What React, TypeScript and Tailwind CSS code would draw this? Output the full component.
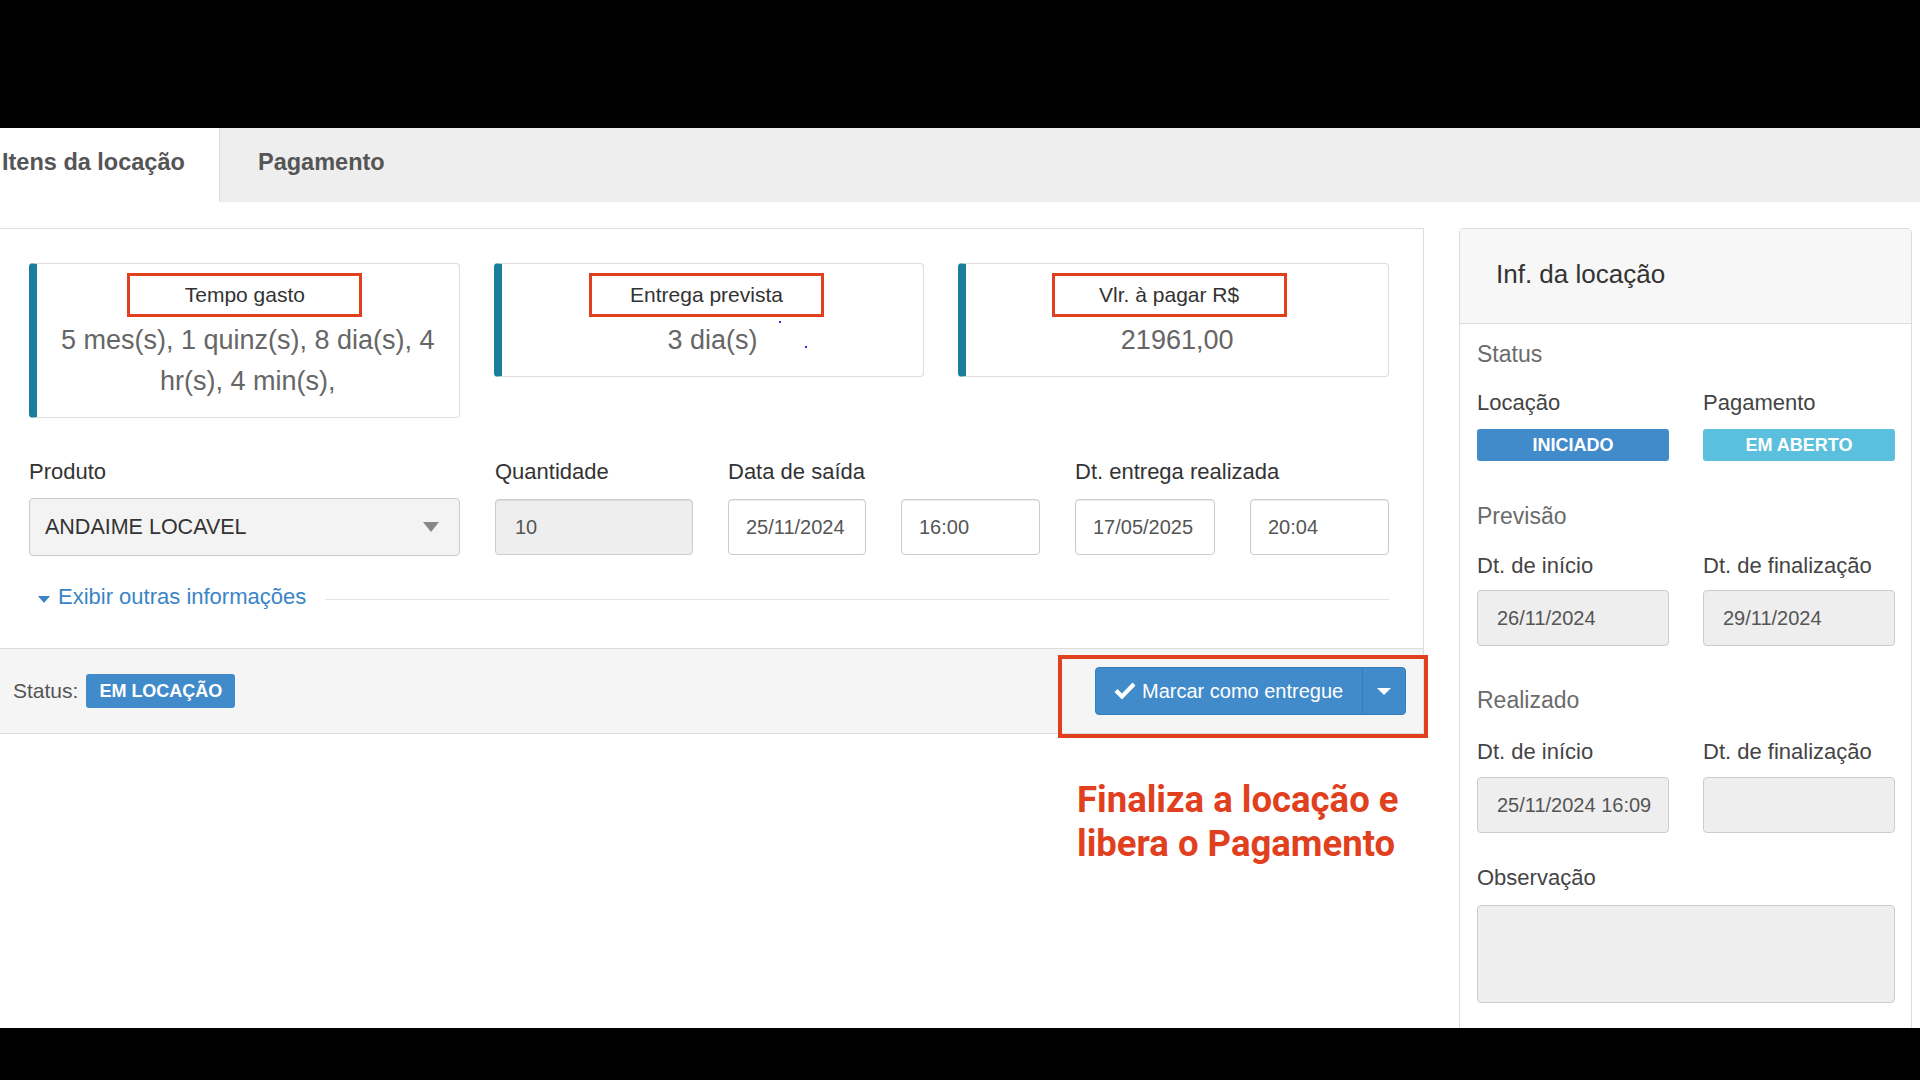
import React from "react";

function InfoCard({ title, shift, children }: { title: string; shift: string; children: React.ReactNode }) {
  return (
    <div className="relative border border-[#ddd] border-l-[8px] border-l-[#1b7d9c] rounded-[4px] pt-[9px] pb-[15px] px-[12px] text-center">
      <div className="flex justify-center">
        <div className={`w-[235px] h-[44px] border-[3px] border-[#e0401e] flex items-center justify-center text-[21px] text-[#333] ${shift}`}>
          {title}
        </div>
      </div>
      <div className="mt-[3px] text-[27px] leading-[41px] text-[#666]">{children}</div>
    </div>
  );
}

function Label({ children, className = "" }: { children: React.ReactNode; className?: string }) {
  return <div className={`text-[22px] leading-[30px] text-[#333] whitespace-nowrap ${className}`}>{children}</div>;
}

function Field({ value, muted }: { value: string; muted?: boolean }) {
  return (
    <div
      className={`h-[56px] border border-[#ccc] rounded-[4px] flex items-center text-[20px] text-[#555] shadow-[inset_0_1px_1px_rgba(0,0,0,0.075)] ${
        muted ? "bg-[#eee] pl-[19px]" : "bg-white pl-[17px]"
      }`}
    >
      {value}
    </div>
  );
}

function MainPanel() {
  return (
    <div className="w-[1424px] shrink-0 border-t border-r border-[#ddd]">
      <div className="pt-[34px] pl-[29px] pr-[34px] pb-[37px]">
        <div className="grid grid-cols-3 gap-x-[34px] items-start">
          <InfoCard title="Tempo gasto" shift="-translate-x-[3px]">
            5 mes(s), 1 quinz(s), 8 dia(s), 4 hr(s), 4 min(s),
          </InfoCard>
          <InfoCard title="Entrega prevista" shift="-translate-x-[6px]">
            3 dia(s)
            <span className="absolute left-[277px] top-[57px] w-[2px] h-[2px] bg-[#2233ee]" />
            <span className="absolute left-[303px] top-[82px] w-[2px] h-[2px] bg-[#2233ee]" />
          </InfoCard>
          <InfoCard title="Vlr. à pagar R$" shift="-translate-x-[8px]">
            21961,00
          </InfoCard>
        </div>

        <div className="grid grid-cols-[431px_198px_138px_139px_140px_139px] gap-x-[35px] gap-y-[12px] mt-[39px]">
          <Label>Produto</Label>
          <Label>Quantidade</Label>
          <Label className="col-span-2">Data de saída</Label>
          <Label className="col-span-2">Dt. entrega realizada</Label>

          <div className="h-[58px] -mt-[1px] bg-[#f3f3f3] border border-[#ccc] rounded-[4px] flex items-center justify-between pl-[15px] pr-[20px] text-[21.5px] text-[#333]">
            <span>ANDAIME LOCAVEL</span>
            <span className="w-0 h-0 border-l-[8px] border-r-[8px] border-t-[10px] border-l-transparent border-r-transparent border-t-[#888]" />
          </div>
          <Field value="10" muted />
          <Field value="25/11/2024" />
          <Field value="16:00" />
          <Field value="17/05/2025" />
          <Field value="20:04" />
        </div>

        <div className="flex items-center h-[30px] mt-[25px]">
          <span className="ml-[9px] mt-[6px] w-0 h-0 border-l-[6px] border-r-[6px] border-t-[7px] border-l-transparent border-r-transparent border-t-[#3a84c6]" />
          <span className="ml-[8px] text-[22px] text-[#3a84c6]">Exibir outras informações</span>
          <div className="flex-1 ml-[19px] mt-[6px] h-px bg-[#e5e5e5]" />
        </div>
      </div>

      <div className="h-[86px] bg-[#f5f5f5] border-y border-[#ddd] flex items-center justify-between pl-[13px] pr-[17px]">
        <div className="flex items-center">
          <span className="text-[21px] text-[#555]">Status:</span>
          <span className="ml-[8px] h-[34px] px-[13px] flex items-center bg-[#428bca] rounded-[3px] text-white font-bold text-[18px]">
            EM LOCAÇÃO
          </span>
        </div>
        <div className="flex h-[48px] rounded-[4px] overflow-hidden border border-[#357ebd] bg-[#428bca]">
          <div className="w-[266px] flex items-center pl-[18px] text-[20px] text-white">
            <svg width="22" height="20" viewBox="0 0 22 20" className="shrink-0">
              <path d="M0.5 11 L3.5 8 L8 12.5 L18.5 1.5 L21.5 4.5 L8 18.5 Z" fill="#fff" />
            </svg>
            <span className="ml-[6px]">Marcar como entregue</span>
          </div>
          <div className="w-[43px] border-l border-[#357ebd] flex items-center justify-center">
            <span className="w-0 h-0 border-l-[7px] border-r-[7px] border-t-[7px] border-l-transparent border-r-transparent border-t-white" />
          </div>
        </div>
      </div>
    </div>
  );
}

function SideLabel({ children }: { children: React.ReactNode }) {
  return <div className="text-[22px] leading-[30px] text-[#444] whitespace-nowrap">{children}</div>;
}

function SideHeading({ children, className }: { children: React.ReactNode; className: string }) {
  return <div className={`text-[23px] leading-[30px] text-[#6b6b6b] ${className}`}>{children}</div>;
}

function SideField({ value }: { value: string }) {
  return (
    <div className="h-[56px] bg-[#eee] border border-[#ccc] rounded-[4px] flex items-center pl-[19px] text-[20px] text-[#555] whitespace-nowrap overflow-hidden">
      {value}
    </div>
  );
}

function SidePanel() {
  return (
    <div className="w-[453px] h-[900px] ml-[35px] shrink-0 border border-[#ddd] rounded-t-[4px]">
      <div className="h-[95px] bg-[#f7f7f7] border-b border-[#ddd] pl-[36px] pt-[29px] text-[26px] leading-[32px] text-[#333]">
        Inf. da locação
      </div>
      <div className="pl-[17px] pr-[16px]">
        <SideHeading className="mt-[15px]">Status</SideHeading>
        <div className="grid grid-cols-2 gap-x-[34px] mt-[19px]">
          <SideLabel>Locação</SideLabel>
          <SideLabel>Pagamento</SideLabel>
          <div className="mt-[11px] h-[32px] rounded-[3px] bg-[#428bca] flex items-center justify-center text-white font-bold text-[18px]">
            INICIADO
          </div>
          <div className="mt-[11px] h-[32px] rounded-[3px] bg-[#5bc0de] flex items-center justify-center text-white font-bold text-[18px]">
            EM ABERTO
          </div>
        </div>

        <SideHeading className="mt-[40px]">Previsão</SideHeading>
        <div className="grid grid-cols-2 gap-x-[34px] gap-y-[9px] mt-[20px]">
          <SideLabel>Dt. de início</SideLabel>
          <SideLabel>Dt. de finalização</SideLabel>
          <SideField value="26/11/2024" />
          <SideField value="29/11/2024" />
        </div>

        <SideHeading className="mt-[39px]">Realizado</SideHeading>
        <div className="grid grid-cols-2 gap-x-[34px] gap-y-[10px] mt-[22px]">
          <SideLabel>Dt. de início</SideLabel>
          <SideLabel>Dt. de finalização</SideLabel>
          <SideField value="25/11/2024 16:09" />
          <SideField value="" />
        </div>

        <div className="mt-[30px]">
          <SideLabel>Observação</SideLabel>
        </div>
        <div className="mt-[12px] h-[98px] bg-[#eee] border border-[#ccc] rounded-[4px]" />
      </div>
    </div>
  );
}

export default function App() {
  return (
    <div className="w-[1920px] h-[1080px] bg-black flex flex-col overflow-hidden font-['Liberation_Sans',Arial,sans-serif]">
      <div className="h-[128px] shrink-0 bg-black" />
      <div className="relative h-[900px] shrink-0 bg-white overflow-hidden">
        <div className="h-[74px] bg-[#eee] flex">
          <div className="w-[220px] h-[74px] bg-white border-r border-[#ddd] pl-[2px] pt-[19px] leading-[30px] text-[23.5px] font-bold text-[#555]">
            Itens da locação
          </div>
          <div className="pl-[38px] pt-[19px] leading-[30px] text-[23.5px] font-bold text-[#555]">Pagamento</div>
        </div>

        <div className="flex items-start mt-[26px]">
          <MainPanel />
          <SidePanel />
        </div>

        <div className="absolute left-[1058px] top-[527px] w-[370px] h-[83px] border-4 border-[#e0401e]" />
        <div className="absolute left-[1077px] top-[650px] font-['Roboto',sans-serif] font-bold text-[36.5px] leading-[44px] text-[#e0401e]">
          Finaliza a locação e
          <br />
          libera o Pagamento
        </div>
      </div>
      <div className="h-[52px] shrink-0 bg-black" />
    </div>
  );
}
